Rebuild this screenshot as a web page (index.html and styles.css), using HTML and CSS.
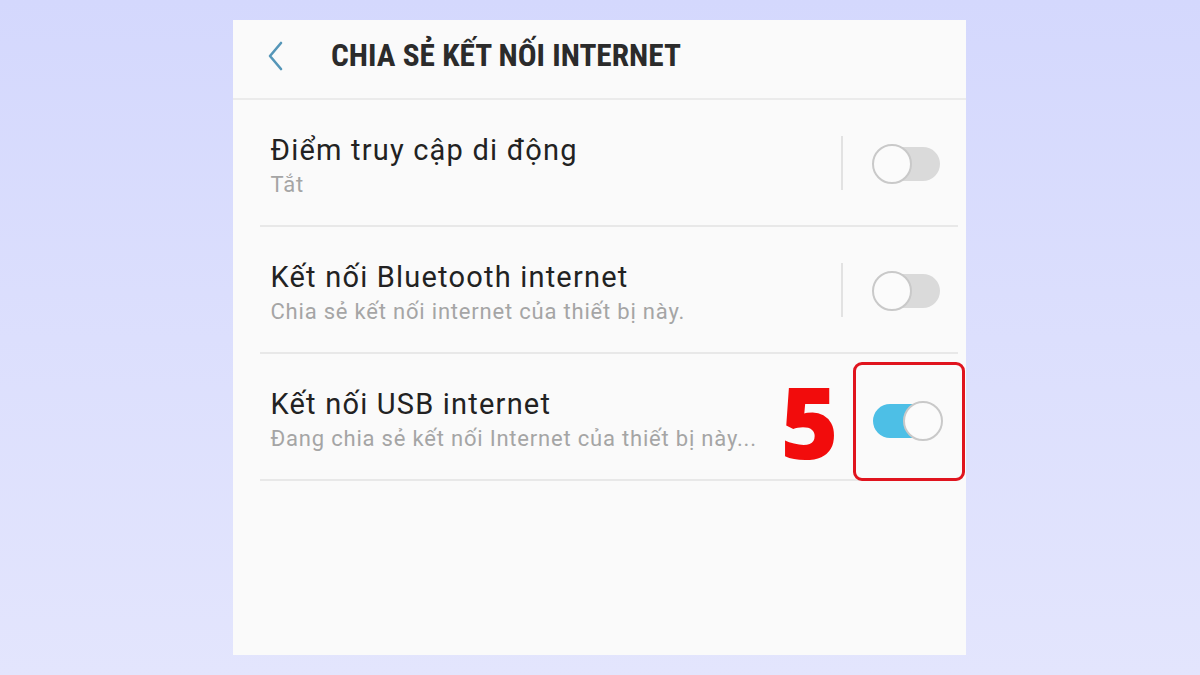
FILE: index.html
```html
<!DOCTYPE html>
<html lang="vi">
<head>
<meta charset="utf-8">
<title>Chia sẻ kết nối Internet</title>
<link rel="stylesheet" href="styles.css">
</head>
<body>
<main class="screen">
  <header class="topbar">
    <svg class="back" width="20" height="32" viewBox="0 0 20 32" aria-hidden="true">
      <path d="M15 3 L4 16 L15 29" fill="none" stroke="#5596b8" stroke-width="2.6" stroke-linecap="round" stroke-linejoin="round"/>
    </svg>
    <h1 class="title">CHIA SẺ KẾT NỐI INTERNET</h1>
  </header>
  <ul class="list">
    <li class="row">
      <div class="text">
        <div class="name">Điểm truy cập di động</div>
        <div class="sub">Tắt</div>
      </div>
      <span class="sep"></span>
      <span class="switch"><span class="knob"></span></span>
    </li>
    <li class="row">
      <div class="text">
        <div class="name">Kết nối Bluetooth internet</div>
        <div class="sub">Chia sẻ kết nối internet của thiết bị này.</div>
      </div>
      <span class="sep"></span>
      <span class="switch"><span class="knob"></span></span>
    </li>
    <li class="row">
      <div class="text">
        <div class="name">Kết nối USB internet</div>
        <div class="sub">Đang chia sẻ kết nối Internet của thiết bị này...</div>
      </div>
      <span class="step">5</span>
      <span class="mark">
        <span class="switch on"><span class="knob"></span></span>
      </span>
    </li>
  </ul>
</main>
</body>
</html>
```
FILE: styles.css
```css
html, body {
  margin: 0;
  height: 100%;
}

body {
  background: linear-gradient(180deg, #d4d8fd 0%, #dcdffd 50%, #e3e5fd 100%);
  font-family: Roboto, "Noto Sans", "Liberation Sans", sans-serif;
  display: flex;
  justify-content: center;
  align-items: flex-start;
}

.screen {
  width: 733px;
  height: 635px;
  margin-top: 20px;
  margin-left: -2px;
  background: #fafafa;
  box-sizing: border-box;
}

.topbar {
  height: 80px;
  box-sizing: border-box;
  border-bottom: 2px solid #ebebeb;
  display: flex;
  align-items: center;
  padding-left: 33px;
}

.back {
  margin-top: -6px;
}

.title {
  margin: -8px 0 0 45px;
  font-family: "Roboto Condensed", "Liberation Sans Narrow", Roboto, sans-serif;
  font-weight: 700;
  font-size: 31px;
  color: #2b2b2b;
  transform: scaleX(1.01);
  transform-origin: left center;
  white-space: nowrap;
}

.list {
  list-style: none;
  margin: 0 8px 0 27px;
  padding: 0;
}

.row {
  height: 127px;
  box-sizing: border-box;
  border-bottom: 2px solid #e8e8e8;
  display: flex;
  align-items: center;
  padding-left: 11px;
}

.row > * {
  flex-shrink: 0;
}

.text {
  width: 570px;
  margin-top: 6px;
}

.name {
  font-size: 29px;
  line-height: 36px;
  letter-spacing: 1.2px;
  color: #222;
}

.sub {
  font-size: 22px;
  line-height: 28px;
  letter-spacing: 0.8px;
  color: #a5a5a5;
  margin-top: 3px;
}

.sep {
  width: 2px;
  height: 54px;
  background: #e2e2e2;
}

.switch {
  position: relative;
  width: 66px;
  height: 34px;
  border-radius: 17px;
  background: #dadada;
  margin-left: 31px;
  margin-top: 2px;
}

.knob {
  position: absolute;
  left: -2px;
  top: -3px;
  width: 36px;
  height: 36px;
  border-radius: 50%;
  background: #fbfbfb;
  border: 2px solid #c9c9c9;
}

.switch.on {
  background: #4dbfe6;
  margin: 0;
}

.switch.on .knob {
  left: 30px;
}

.step {
  width: 70px;
  margin-left: -60px;
  margin-right: 2px;
  font-family: "Open Sans", "Noto Sans", sans-serif;
  font-weight: 800;
  font-size: 99px;
  line-height: 1;
  color: #f20c0c;
  margin-top: 8px;
  letter-spacing: -2px;
}

.mark {
  width: 112px;
  height: 119px;
  box-sizing: border-box;
  border: 3px solid #e0141e;
  border-radius: 9px;
  display: flex;
  align-items: center;
  justify-content: center;
  margin-top: 9px;
  padding-right: 5px;
}
```
